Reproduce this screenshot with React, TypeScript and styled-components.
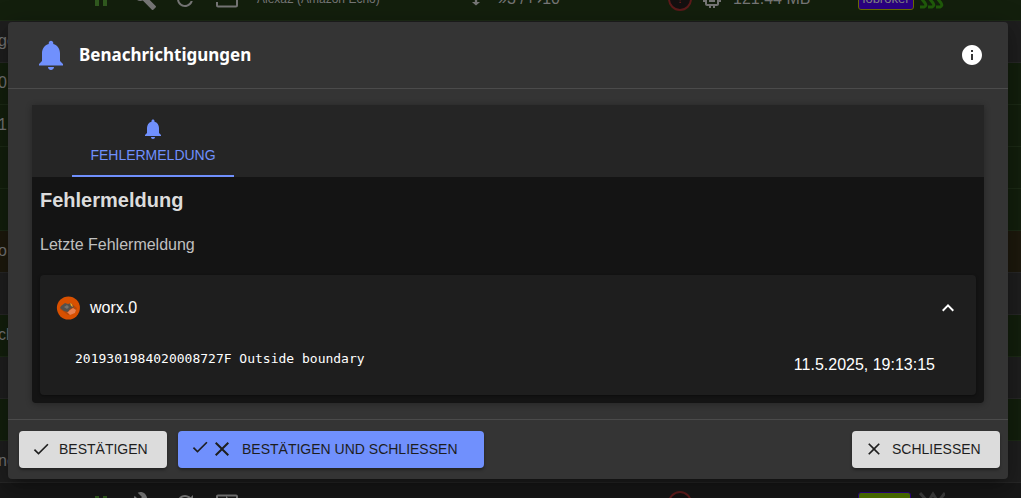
import React from "react";
import styled, { createGlobalStyle } from "styled-components";

const GlobalStyle = createGlobalStyle`
  * { box-sizing: border-box; }
  body {
    margin: 0;
    background: #171717;
    color: #fff;
    font-family: "Liberation Sans", Arial, sans-serif;
    font-size: 16px;
    line-height: 24px;
  }
  h1, h2, p, pre { margin: 0; }
  button { font-family: inherit; border: 0; cursor: pointer; }
`;

const paths = {
  bell: "M12 22c1.1 0 2-.9 2-2h-4c0 1.1.89 2 2 2zm6-6v-5c0-3.07-1.64-5.64-4.5-6.32V4c0-.83-.67-1.5-1.5-1.5s-1.5.67-1.5 1.5v.68C7.63 5.36 6 7.92 6 11v5l-2 2v1h16v-1l-2-2z",
  info: "M12 2C6.48 2 2 6.48 2 12s4.48 10 10 10 10-4.48 10-10S17.52 2 12 2zm1 15h-2v-6h2v6zm0-8h-2V7h2v2z",
  up: "M12 8l-6 6 1.41 1.41L12 10.83l4.59 4.58L18 14z",
  check: "M9 16.17 4.83 12l-1.42 1.41L9 19 21 7l-1.41-1.41z",
  close:
    "M19 6.41 17.59 5 12 10.59 6.41 5 5 6.41 10.59 12 5 17.59 6.41 19 12 13.41 17.59 19 19 17.59 13.41 12z",
  pause: "M6 19h4V5H6v14zm8-14v14h4V5h-4z",
  wrench:
    "M22.7 19l-9.1-9.1c.9-2.3.4-5-1.5-6.9-2-2-5-2.4-7.4-1.3L9 6 6 9 1.6 4.7C.4 7.1.9 10.1 2.9 12.1c1.9 1.9 4.6 2.4 6.9 1.5l9.1 9.1c.4.4 1 .4 1.4 0l2.3-2.3c.5-.4.5-1.1.1-1.4z",
  refresh:
    "M17.65 6.35C16.2 4.9 14.21 4 12 4c-4.42 0-7.99 3.58-7.99 8s3.57 8 7.99 8c3.73 0 6.84-2.55 7.73-6h-2.08c-.82 2.33-3.04 4-5.65 4-3.31 0-6-2.69-6-6s2.69-6 6-6c1.66 0 3.14.69 4.22 1.78L13 11h7V4l-2.35 2.35z",
  input:
    "M21 3.5H3c-1.1 0-2 .9-2 2V9h2V5.5h18v13H3V15H1v3.5c0 1.1.9 2 2 2h18c1.1 0 2-.9 2-2v-13c0-1.1-.9-2-2-2zM11 13l4-4-4-4v3H1v2h10v3z",
  arrowDown: "M10 2h4v15h5l-7 6-7-6h5z",
  memory:
    "M15 9H9v6h6V9zm-2 4h-2v-2h2v2zm8-2V9h-2V7c0-1.1-.9-2-2-2h-2V3h-2v2h-2V3H9v2H7c-1.1 0-2 .9-2 2v2H3v2h2v2H3v2h2v2c0 1.1.9 2 2 2h2v2h2v-2h2v2h2v-2h2c1.1 0 2-.9 2-2v-2h2v-2h-2v-2h2zm-4 6H7V7h10v10z",
};

const Svg = styled.svg<{ $size: number }>`
  display: block;
  flex: none;
  width: ${(p) => p.$size}px;
  height: ${(p) => p.$size}px;
  fill: currentColor;
`;

function Icon({ name, size = 24 }: { name: keyof typeof paths; size?: number }) {
  return (
    <Svg viewBox="0 0 24 24" $size={size} aria-hidden="true">
      <path d={paths[name]} />
    </Svg>
  );
}

const Page = styled.div`
  position: relative;
  min-height: 100vh;
  overflow: hidden;
`;

/* Instance list dimmed behind the dialog */
const Backdrop = styled.div`
  position: absolute;
  inset: 0;
  overflow: hidden;
  color: #757575;
`;

const Rows = styled.div`
  margin: -21px 0 0 -2px;
`;

const tones = { green: "#131f0d", grey: "#1e1e1e", brown: "#1d190d", dark: "#171717" };

const Row = styled.div<{ $tone: keyof typeof tones }>`
  display: grid;
  grid-template-columns: 91px 44px 40px 42px 42px 212px 29px 170px 32px 33px 125px 61px 1fr;
  align-items: center;
  height: 42px;
  padding-bottom: 2px;
  background: ${(p) => tones[p.$tone]};
  border-bottom: 1px solid ${(p) => (p.$tone === "green" ? "#1c2a16" : "#272727")};
  white-space: nowrap;
`;

const Cell = styled.span<{ $color?: string; $small?: boolean }>`
  color: ${(p) => p.$color ?? "inherit"};
  font-size: ${(p) => (p.$small ? 12 : 16)}px;
`;

const Level = styled.span`
  width: 24px;
  height: 24px;
  border: 2px solid #5c1a1a;
  border-radius: 50%;
  background: #141010;
  color: #7a2020;
  font-size: 12px;
  line-height: 20px;
  text-align: center;
`;

const Host = styled.span<{ $green?: boolean }>`
  justify-self: start;
  min-width: ${(p) => (p.$green ? 53 : 56)}px;
  height: 22px;
  padding: 0 3px;
  border: 1px solid ${(p) => (p.$green ? "#2a0080" : "#6b6b00")};
  border-radius: 3px;
  background: ${(p) => (p.$green ? "#4a6d00" : "#2a0080")};
  color: ${(p) => (p.$green ? "#151515" : "#808080")};
  font-size: 13px;
  line-height: 19px;
  text-align: center;
`;

function InstanceRow({ tone, last }: { tone: "green" | "dark"; last?: boolean }) {
  return (
    <Row $tone={tone}>
      <Cell />
      <Cell $color="#30591f"><Icon name="pause" /></Cell>
      <Cell><Icon name="wrench" /></Cell>
      <Cell><Icon name="refresh" /></Cell>
      <Cell><Icon name="input" /></Cell>
      <Cell $small>{last ? "" : "Alexa2 (Amazon Echo)"}</Cell>
      <Cell>{!last && <Icon name="arrowDown" size={14} />}</Cell>
      <Cell>{last ? "" : "»3 / ↦10"}</Cell>
      <Level>!</Level>
      <Cell>{!last && <Icon name="memory" />}</Cell>
      <Cell>{last ? "" : "121.44 MB"}</Cell>
      <Host $green={last}>{last ? "slave10" : "iobroker"}</Host>
      <Cell $color={last ? "#3a3a3a" : "#1f5a0a"}>
        <Svg as="svg" $size={26} viewBox="0 0 26 26" aria-hidden="true">
          <path
            fill="none"
            stroke="currentColor"
            strokeWidth="3"
            d={
              last
                ? "M1 3l8 9 5-8 5 8 7-9"
                : "M1 21h4q3-1 1-4l-4-5M9 21h4q3-1 1-4l-4-5M17 21h4q3-1 1-4l-4-5"
            }
          />
        </Svg>
      </Cell>
    </Row>
  );
}

const plainRows: [keyof typeof tones, string][] = [
  ["grey", "ge"],
  ["green", "0"],
  ["green", "1"],
  ["green", ""],
  ["green", ""],
  ["brown", "o"],
  ["grey", ""],
  ["green", "ch"],
  ["grey", ""],
  ["green", ""],
  ["grey", "ne"],
];

const Dialog = styled.section`
  position: relative;
  margin: 22px 13px 19px 8px;
  border-radius: 4px;
  background: #343434;
  box-shadow: 0 10px 14px -6px rgba(0, 0, 0, 0.3), 0 4px 24px 2px rgba(0, 0, 0, 0.25);
`;

const Header = styled.header`
  display: flex;
  align-items: center;
  gap: 10px;
  height: 67px;
  padding: 0 24px 0 25px;
  border-bottom: 1px solid #4b4b4b;
`;

const Accent = styled.span`
  color: #7090fd;
`;

const Title = styled.h1`
  flex: 1;
  font-family: "Noto Sans", "Open Sans", sans-serif;
  font-size: 17px;
  font-weight: 700;
  line-height: 24px;
`;

const IconButton = styled.button`
  padding: 0;
  background: none;
  color: #fff;
`;

const Content = styled.div`
  padding: 16px 24px;
`;

const Panel = styled.div`
  overflow: hidden;
  border-radius: 0 0 4px 4px;
  background: #141414;
  box-shadow: 0 1px 6px rgba(0, 0, 0, 0.3);
`;

const TabBar = styled.div`
  display: flex;
  height: 72px;
  padding: 0 40px;
  background: #252525;
`;

const Tab = styled.button`
  display: flex;
  flex-direction: column;
  align-items: center;
  min-width: 162px;
  padding: 12px 16px 0;
  border-bottom: 2px solid #7090fd;
  background: none;
  color: #7090fd;
  font-size: 14px;
  line-height: 18px;
  gap: 5px;
`;

const Body = styled.div`
  padding: 11px 8px 8px;
`;

const Heading = styled.h2`
  color: #dcdcdc;
  font-size: 20px;
  line-height: 24px;
`;

const Description = styled.p`
  margin: 21px 0 18px;
  color: #c0c0c0;
`;

const Card = styled.div`
  border-radius: 4px;
  background: #1e1e1e;
  box-shadow: 0 1px 3px rgba(0, 0, 0, 0.4);
`;

const Summary = styled.button`
  display: flex;
  align-items: center;
  gap: 10px;
  width: 100%;
  height: 64px;
  padding: 1px 16px 0;
  background: none;
  color: #fff;
  font-size: 16px;
  text-align: left;
`;

const Name = styled.span`
  flex: 1;
`;

const Details = styled.div`
  display: flex;
  justify-content: space-between;
  height: 56px;
  padding: 8px 41px 16px 35px;
`;

const Message = styled.pre`
  font-family: "DejaVu Sans Mono", monospace;
  font-size: 13px;
  line-height: 24px;
`;

const Time = styled.time`
  padding-top: 6px;
`;

const Footer = styled.footer`
  display: flex;
  gap: 11px;
  padding: 11px 8px 11px 11px;
  border-top: 1px solid #4b4b4b;
`;

const Action = styled.button<{ $primary?: boolean; $end?: boolean }>`
  display: flex;
  align-items: center;
  gap: 8px;
  min-width: ${(p) => (p.$primary ? 306 : 148)}px;
  height: 37px;
  margin-left: ${(p) => (p.$end ? "auto" : "0")};
  padding: 0 16px 2px 12px;
  border-radius: 4px;
  background: ${(p) => (p.$primary ? "#7090fd" : "#dcdcdc")};
  color: #1e1e1e;
  box-shadow: 0 2px 3px rgba(0, 0, 0, 0.35);
  font-size: 14px;
  line-height: 24px;
`;

const IconPair = styled.span`
  display: flex;
`;

function WorxLogo() {
  return (
    <svg width="24" height="24" viewBox="0 0 24 24" aria-hidden="true">
      <circle cx="12.4" cy="12" r="11.5" fill="#d85000" />
      <path d="M4 13l8 6 7-2 2-5-5-4-7 1z" fill="#b54808" />
      <path d="M11 16l6-4 3 2-1 3-5 2z" fill="#e88050" />
      <path d="M5 10l4-3 3 1 3-1 3 4-4 2-2 3-4-1-4-3z" fill="#55504b" />
      <path d="M8 11l3-2 2 2-2 2z" fill="#77716a" />
      <path d="M14 7l2 1 1 3-2-1z" fill="#f0a020" />
    </svg>
  );
}

export default function App() {
  return (
    <Page>
      <GlobalStyle />
      <Backdrop aria-hidden="true">
        <Rows>
          <InstanceRow tone="green" />
          {plainRows.map(([tone, text], i) => (
            <Row key={i} $tone={tone}>
              <Cell>{text}</Cell>
            </Row>
          ))}
          <InstanceRow tone="dark" last />
        </Rows>
      </Backdrop>

      <Dialog role="dialog" aria-labelledby="dialog-title">
        <Header>
          <Accent><Icon name="bell" size={36} /></Accent>
          <Title id="dialog-title">Benachrichtigungen</Title>
          <IconButton type="button" aria-label="Info"><Icon name="info" /></IconButton>
        </Header>

        <Content>
          <Panel>
            <TabBar role="tablist">
              <Tab type="button" role="tab" aria-selected="true">
                <Icon name="bell" />
                FEHLERMELDUNG
              </Tab>
            </TabBar>
            <Body role="tabpanel">
              <Heading>Fehlermeldung</Heading>
              <Description>Letzte Fehlermeldung</Description>
              <Card>
                <Summary type="button" aria-expanded="true">
                  <WorxLogo />
                  <Name>worx.0</Name>
                  <Icon name="up" />
                </Summary>
                <Details>
                  <Message>2019301984020008727F Outside boundary</Message>
                  <Time>11.5.2025, 19:13:15</Time>
                </Details>
              </Card>
            </Body>
          </Panel>
        </Content>

        <Footer>
          <Action type="button">
            <Icon name="check" size={20} />
            BESTÄTIGEN
          </Action>
          <Action type="button" $primary>
            <IconPair>
              <Icon name="check" size={20} />
              <Icon name="close" />
            </IconPair>
            BESTÄTIGEN UND SCHLIESSEN
          </Action>
          <Action type="button" $end>
            <Icon name="close" size={20} />
            SCHLIESSEN
          </Action>
        </Footer>
      </Dialog>
    </Page>
  );
}
